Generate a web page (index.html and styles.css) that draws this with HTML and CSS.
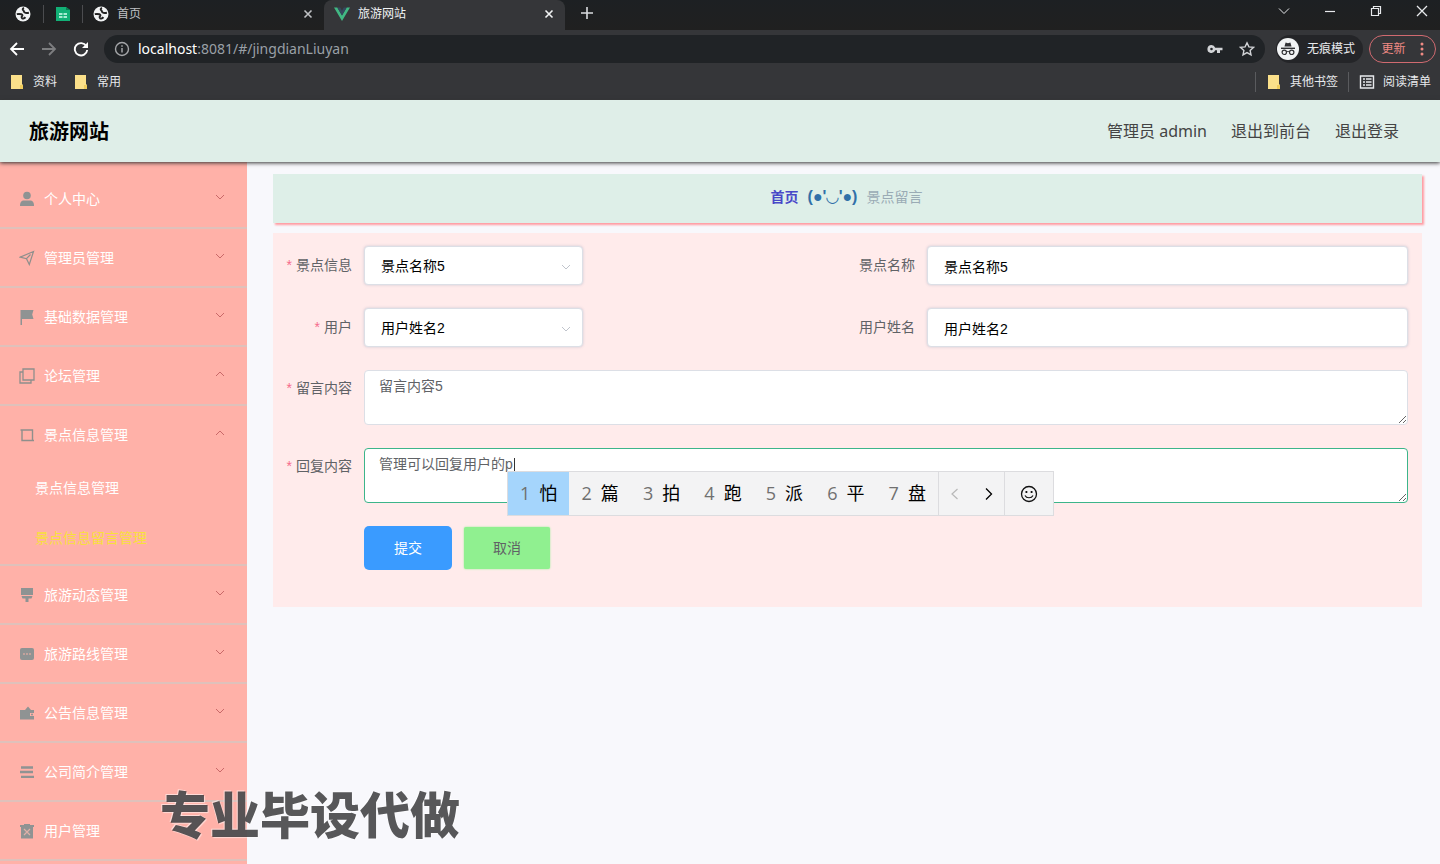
FILE: index.html
```html
<!DOCTYPE html>
<html lang="zh-CN">
<head>
<meta charset="utf-8">
<title>旅游网站</title>
<link rel="stylesheet" href="styles.css">
</head>
<body>
<svg class="sprite" aria-hidden="true">
  <symbol id="globe" viewBox="0 0 16 16"><circle cx="8" cy="8" r="7.500" fill="#f1f3f4"/><path d="M1.800 8.200c1.700-.4 3.200-.3 4.600 0 1.300.4 1.300 1.400.6 2-.8.700-.4 1.600.2 2.200.8.600 2.400-.2 3.200-1.300M9 1.800C7.600 2.300 7.300 3.600 8.200 4.300c.8.600.6 1.600 1.500 2.200 1.200.8 2.700.5 4.200.2" fill="none" stroke="#222" stroke-width="1.900"/></symbol>
  <symbol id="close" viewBox="0 0 12 12"><path d="M2.500 2.500l7 7M9.500 2.500l-7 7" fill="none" stroke="currentColor" stroke-width="1.600"/></symbol>
  <symbol id="down" viewBox="0 0 12 12"><path d="M2 4l4 4 4-4" fill="none" stroke="currentColor"/></symbol>
  <symbol id="up" viewBox="0 0 12 12"><path d="M2 8l4-4 4 4" fill="none" stroke="currentColor"/></symbol>
  <symbol id="folder" viewBox="0 0 14 16"><path d="M1 1h11v9l1 1v4H1z" fill="#fbe08a"/><path d="M10 15v-4h3v4z" fill="#f0cc5c"/></symbol>
</svg>

<div class="browser">
  <div class="tabs">
    <button class="pin" aria-label="首页"><svg class="i16"><use href="#globe"/></svg></button>
    <button class="pin" aria-label="表格"><svg class="i16" viewBox="0 0 16 16"><path d="M1 1h10l4 3v11H1z" fill="#12b076"/><path d="M11 1l4 3h-4z" fill="#0a7d52"/><path d="M4 8h3.500M8.500 8H12M4 11h3.500M8.500 11H12" stroke="#d8fff0" stroke-width="1.500"/></svg></button>
    <div class="tab"><svg class="i16"><use href="#globe"/></svg><span class="tab-title">首页</span><button class="tab-close" aria-label="关闭"><svg class="i12"><use href="#close"/></svg></button></div>
    <div class="tab active"><svg class="i16" viewBox="0 0 16 16"><path d="M0 1.500h3.300L8 9.600l4.700-8.100H16L8 15z" fill="#41b883"/><path d="M3.300 1.500h2.900L8 4.700l1.800-3.200h2.900L8 9.600z" fill="#35495e"/></svg><span class="tab-title">旅游网站</span><button class="tab-close" aria-label="关闭"><svg class="i12"><use href="#close"/></svg></button></div>
    <button class="new-tab" aria-label="新标签页"><svg class="i16" viewBox="0 0 16 16"><path d="M8 2v12M2 8h12" stroke="currentColor" stroke-width="1.600"/></svg></button>
    <div class="window-buttons">
      <button aria-label="搜索标签页"><svg class="i14" viewBox="0 0 14 14"><path d="M2 4.500l5 5 5-5" fill="none" stroke="currentColor"/></svg></button>
      <button aria-label="最小化"><svg class="i14" viewBox="0 0 14 14"><path d="M2 7.500h10" stroke="currentColor" stroke-width="1.200"/></svg></button>
      <button aria-label="还原"><svg class="i14" viewBox="0 0 14 14"><path d="M2.500 4.500h7v7h-7zM4.500 4.500v-2h7v7h-2" fill="none" stroke="currentColor" stroke-width="1.200"/></svg></button>
      <button aria-label="关闭窗口"><svg class="i14" viewBox="0 0 14 14"><path d="M2 2l10 10M12 2L2 12" stroke="currentColor" stroke-width="1.300"/></svg></button>
    </div>
  </div>
  <div class="toolbar">
    <div class="nav-buttons">
      <button aria-label="后退"><svg class="i16" viewBox="0 0 16 16"><path d="M15 8H2.500M8 2L2 8l6 6" fill="none" stroke="#fff" stroke-width="1.800"/></svg></button>
      <button aria-label="前进"><svg class="i16" viewBox="0 0 16 16"><path d="M1 8h12.500M8 2l6 6-6 6" fill="none" stroke="#7d7e80" stroke-width="1.800"/></svg></button>
      <button aria-label="刷新"><svg class="i16" viewBox="0 0 16 16"><path d="M13.300 5A6.200 6.200 0 1 0 14.200 9" fill="none" stroke="#fff" stroke-width="1.900"/><path d="M15 1v6H9z" fill="#fff"/></svg></button>
    </div>
    <div class="address">
      <svg class="i16" viewBox="0 0 16 16"><circle cx="8" cy="8" r="6.500" fill="none" stroke="#a4a6a9" stroke-width="1.400"/><path d="M8 7v4.500M8 4.200v1.600" stroke="#a4a6a9" stroke-width="1.500"/></svg>
      <div class="url"><b>localhost</b>:8081/#/jingdianLiuyan</div>
      <button aria-label="密码"><svg class="i16" viewBox="0 0 16 16"><path d="M4.500 4a4 4 0 1 0 3.700 5.300H10V12h3V9.300h2.500V6.700H8.200A4 4 0 0 0 4.500 4zm0 2.700a1.300 1.300 0 1 1 0 2.600 1.300 1.300 0 0 1 0-2.600z" fill="#d2d4d7" fill-rule="evenodd"/></svg></button>
      <button aria-label="收藏"><svg class="i16" viewBox="0 0 16 16"><path d="M8 1.800l1.900 4.100 4.500.5-3.300 3 .9 4.400L8 11.600l-4 2.200.9-4.400-3.300-3 4.500-.5z" fill="none" stroke="#d2d4d7" stroke-width="1.400"/></svg></button>
    </div>
    <button class="incognito"><svg class="i22" viewBox="0 0 22 22"><circle cx="11" cy="11" r="11" fill="#f1f3f4"/><path d="M7.500 8.500L8.600 4.400l2.400.8 2.400-.8 1.100 4.100z" fill="#303134"/><path d="M4 10.300h14" stroke="#303134" stroke-width="1.400"/><path d="M9.400 14c1-.7 2.200-.7 3.200 0" fill="none" stroke="#303134"/><circle cx="7.300" cy="14.300" r="2.200" fill="none" stroke="#303134" stroke-width="1.200"/><circle cx="14.700" cy="14.300" r="2.200" fill="none" stroke="#303134" stroke-width="1.200"/></svg>无痕模式</button>
    <button class="update">更新<svg class="i16" viewBox="0 0 16 16"><circle cx="8" cy="3" r="1.500" fill="#f08a84"/><circle cx="8" cy="8" r="1.500" fill="#f08a84"/><circle cx="8" cy="13" r="1.500" fill="#f08a84"/></svg></button>
  </div>
  <div class="bookmarks">
    <button><svg class="i16"><use href="#folder"/></svg>资料</button>
    <button><svg class="i16"><use href="#folder"/></svg>常用</button>
    <div class="bookmarks-right">
      <button><svg class="i16"><use href="#folder"/></svg>其他书签</button>
      <button><svg class="i16" viewBox="0 0 16 16"><path d="M1.500 2h13v12h-13z" fill="none" stroke="#e8eaed" stroke-width="1.400"/><path d="M4 5h2M4 8h2M4 11h2M7 5h5.500M7 8h5.500M7 11h5.500" stroke="#e8eaed" stroke-width="1.400"/></svg>阅读清单</button>
    </div>
  </div>
</div>

<header class="site-header">
  <h1>旅游网站</h1>
  <nav><span>管理员 admin</span><a href="#">退出到前台</a><a href="#">退出登录</a></nav>
</header>

<div class="layout">
  <nav class="sidebar">
    <div class="group"><button><svg class="i16" viewBox="0 0 16 16"><circle cx="8" cy="4.500" r="3.800" fill="#8f9393"/><path d="M1 15c0-4 1.500-5.500 4-5.500h6c2.500 0 4 1.500 4 5.500z" fill="#8f9393"/></svg><span>个人中心</span><svg class="i12 arrow"><use href="#down"/></svg></button></div>
    <div class="group"><button><svg class="i16" viewBox="0 0 16 16"><path d="M14.500 1.500L1 7.200l6.500 1.500 2.800 5.800zM11.500 4.500L7.500 8.700" fill="none" stroke="#8f8f8c" stroke-width="1.200"/></svg><span>管理员管理</span><svg class="i12 arrow"><use href="#down"/></svg></button></div>
    <div class="group"><button><svg class="i16" viewBox="0 0 16 16"><path d="M1.500 1h13l-1.300 4.500 1.300 4.500H3v6H1.500z" fill="#8f9393"/></svg><span>基础数据管理</span><svg class="i12 arrow"><use href="#down"/></svg></button></div>
    <div class="group"><button><svg class="i16" viewBox="0 0 16 16"><path d="M4 1h11v11H4zM4 4H1v11h11v-3" fill="none" stroke="#8f8f8c" stroke-width="1.300"/></svg><span>论坛管理</span><svg class="i12 arrow"><use href="#up"/></svg></button></div>
    <div class="group"><button><svg class="i16" viewBox="0 0 16 16"><path d="M3 3h10.500v10.500H3zM1.500 3H3M13.500 13.500H15" fill="none" stroke="#8f8f8c" stroke-width="1.400"/></svg><span>景点信息管理</span><svg class="i12 arrow"><use href="#up"/></svg></button>
      <div class="submenu"><a href="#">景点信息管理</a><a href="#" class="current">景点信息留言管理</a></div>
    </div>
    <div class="group"><button><svg class="i16" viewBox="0 0 16 16"><path d="M2 1h12v7H2zM2.500 9h11l-1 2.500H9.500V15h-3v-3.500h-3z" fill="#8f9393"/></svg><span>旅游动态管理</span><svg class="i12 arrow"><use href="#down"/></svg></button></div>
    <div class="group"><button><svg class="i16" viewBox="0 0 16 16"><rect x="1" y="2" width="14" height="12" rx="2" fill="#8f9393"/><path d="M4 8h2M7 8h2M10 8h2" stroke="#d3a8a0" stroke-width="1.300"/></svg><span>旅游路线管理</span><svg class="i12 arrow"><use href="#down"/></svg></button></div>
    <div class="group"><button><svg class="i16" viewBox="0 0 16 16"><path d="M1 5h5l3-3.500L12 5h3v3h-4v3h4v3.500H1z" fill="#8f9393"/><circle cx="13" cy="9.500" r="1" fill="#8f9393"/></svg><span>公告信息管理</span><svg class="i12 arrow"><use href="#down"/></svg></button></div>
    <div class="group"><button><svg class="i16" viewBox="0 0 16 16"><path d="M2 3.500h12M1 8h13M2 12.800h13" stroke="#8f9393" stroke-width="2.300"/></svg><span>公司简介管理</span><svg class="i12 arrow"><use href="#down"/></svg></button></div>
    <div class="group"><button><svg class="i16" viewBox="0 0 16 16"><path d="M1 2h4V1h6v1h4v2h-1v11.500H2V4H1z" fill="#8f9393"/><path d="M5 6l6 6M11 6l-6 6" stroke="#e0b0a8" stroke-width="1.200"/></svg><span>用户管理</span></button></div>
  </nav>

  <main>
    <nav class="breadcrumb"><a href="#">首页</a><span class="face">(●'◡'●)</span><span class="here">景点留言</span></nav>
    <form class="panel">
      <div class="row two">
        <label class="required" for="spot">景点信息</label>
        <div class="select"><select id="spot"><option>景点名称5</option></select><svg class="i12"><use href="#down"/></svg></div>
        <label for="spot-name">景点名称</label>
        <input id="spot-name" type="text" value="景点名称5">
      </div>
      <div class="row two">
        <label class="required" for="user">用户</label>
        <div class="select"><select id="user"><option>用户姓名2</option></select><svg class="i12"><use href="#down"/></svg></div>
        <label for="user-name">用户姓名</label>
        <input id="user-name" type="text" value="用户姓名2">
      </div>
      <div class="row">
        <label class="required" for="message">留言内容</label>
        <textarea id="message">留言内容5</textarea>
      </div>
      <div class="row">
        <label class="required" for="reply">回复内容</label>
        <div class="composer">
          <textarea id="reply" class="focused">管理可以回复用户的p</textarea>
          <span class="caret"></span>
          <div class="ime">
            <button type="button" class="word chosen"><i>1</i>怕</button><button type="button" class="word"><i>2</i>篇</button><button type="button" class="word"><i>3</i>拍</button><button type="button" class="word"><i>4</i>跑</button><button type="button" class="word"><i>5</i>派</button><button type="button" class="word"><i>6</i>平</button><button type="button" class="word"><i>7</i>盘</button>
            <div class="pager"><button type="button" class="off" aria-label="上一页"><svg class="i16" viewBox="0 0 16 16"><path d="M10.500 3L5 8l5.500 5" fill="none" stroke="currentColor" stroke-width="1.200"/></svg></button><button type="button" aria-label="下一页"><svg class="i16" viewBox="0 0 16 16"><path d="M6 2.500L11.500 8 6 13.500" fill="none" stroke="currentColor" stroke-width="1.300"/></svg></button></div>
            <button type="button" class="emoji" aria-label="表情"><svg class="i20" viewBox="0 0 20 20"><circle cx="10" cy="10" r="7.500" fill="none" stroke="#111" stroke-width="1.300"/><circle cx="7.400" cy="8" r="1.100"/><circle cx="12.600" cy="8" r="1.100"/><path d="M6 11.500c1.500 3 6.500 3 8 0" fill="none" stroke="#111" stroke-width="1.200"/></svg></button>
          </div>
        </div>
      </div>
      <div class="actions"><button type="button" class="submit">提交</button><button type="button" class="cancel">取消</button></div>
    </form>
  </main>
</div>
<div class="watermark">专业毕设代做</div>
</body>
</html>
```

FILE: styles.css
```css
* { box-sizing: border-box; }
body {
  margin: 0;
  height: 100vh;
  display: flex;
  flex-direction: column;
  overflow: hidden;
  position: relative;
  background: #f8f8fc;
  font: 14px/20px "Open Sans", "Noto Sans CJK SC", sans-serif;
  color: #606266;
}
button { border: 0; padding: 0; background: none; font: inherit; color: inherit; display: flex; align-items: center; justify-content: center; }
a { color: inherit; text-decoration: none; }
svg { flex: none; display: block; }
.sprite { position: absolute; width: 0; height: 0; }
.i12 { width: 12px; height: 12px; }
.i14 { width: 14px; height: 14px; }
.i16 { width: 16px; height: 16px; }
.i20 { width: 20px; height: 20px; }
.i22 { width: 22px; height: 22px; }

/* browser frame */
.browser { flex: none; background: #353639; color: #e8eaed; font-size: 12px; }
.tabs { display: flex; height: 30px; background: linear-gradient(#1d2023, #202020); }
.pin { width: 39px; height: 18px; margin-top: 5px; border-right: 1px solid #4b4c4f; }
.pin:first-child { width: 44px; padding-left: 2px; }
.tab { display: flex; align-items: center; width: 241px; padding: 0 10px 2px; gap: 8px; color: #bfc1c4; }
.tab.active { background: #353639; color: #f1f3f4; border-radius: 8px 8px 0 0; }
.tab-title { flex: 1; }
.new-tab { width: 44px; padding-bottom: 4px; color: #dadce0; }
.window-buttons { margin-left: auto; display: flex; padding-bottom: 9px; }
.window-buttons button { width: 46px; }
.window-buttons button:last-child { width: 36px; margin-left: 5px; }
.toolbar { display: flex; align-items: center; height: 37px; padding-right: 4px; }
.nav-buttons { display: flex; gap: 16px; padding: 0 15px 0 9px; }
.address { flex: 1; display: flex; align-items: center; gap: 16px; height: 28px; padding: 0 10px; border-radius: 14px; background: #202326; }
.url { flex: 1; margin-left: -8px; font: 14px/20px "Noto Sans", sans-serif; color: #9aa0a6; }
.url b { font-weight: 400; color: #fff; }
.incognito { height: 28px; margin: 0 6px 0 11px; padding: 0 8px 0 1px; gap: 8px; border-radius: 14px; background: #242528; }
.update { height: 28px; width: 67px; padding-left: 6px; gap: 8px; border: 1px solid #d06a70; border-radius: 14px; color: #f08a84; }
.bookmarks { display: flex; align-items: center; height: 33px; padding: 0 9px 4px; gap: 16px; }
.bookmarks button { gap: 8px; }
.bookmarks-right { display: flex; margin-left: auto; }
.bookmarks-right button { padding-left: 10px; border-left: 1px solid #5a5b5e; }
.bookmarks-right button:first-child { padding-right: 10px; }

/* site header */
.site-header {
  flex: none; display: flex; align-items: center; justify-content: space-between;
  height: 62px; padding: 0 41px 0 29px;
  background: #dfeee8; position: relative; z-index: 1;
  box-shadow: 0 1px 4px #333;
}
h1 { margin: 0; padding-top: 2px; font-size: 20px; line-height: 28px; color: #000; }
.site-header nav { display: flex; gap: 24px; font-family: "Noto Sans", "Noto Sans CJK SC", sans-serif; font-size: 16px; color: #444; }

.layout { flex: 1; min-height: 0; display: flex; }
.sidebar { flex: none; width: 247px; padding-top: 8px; background: #ffb1a8; overflow: hidden; color: #fff; }
.group { border-bottom: 2px solid #dfc1bb; }
.group button { width: 100%; height: 57px; padding: 0 21px 0 19px; gap: 9px; }
.group span { flex: 1; text-align: left; }
.arrow { color: #c96868; margin-bottom: 4px; }
.submenu { padding-bottom: 1px; }
.submenu a { display: block; padding-left: 35px; line-height: 50px; }
.submenu .current { color: #f8e03c; }

main { flex: 1; min-width: 0; padding: 12px 18px 0 26px; }
.breadcrumb {
  display: flex; align-items: center; justify-content: center; gap: 9px;
  height: 49px; padding: 0 2px 3px 0; margin-bottom: 10px;
  background: #deefe8; box-shadow: 2px 2px 2px #ff9ba1;
}
.breadcrumb a { font-weight: 700; color: #4848c8; }
.face { font: 700 16px/20px "Liberation Sans", "DejaVu Sans", sans-serif; color: #3070a8; }
.here { color: #9aabb5; }

.panel { display: flex; flex-direction: column; gap: 23px; padding: 13px 14px 37px 0; background: #ffebeb; }
.row { display: grid; grid-template-columns: 79px 1fr; column-gap: 12px; }
.row.two { grid-template-columns: 79px 1fr 79px 481px; }
label { text-align: right; line-height: 38px; }
.row:not(.two) label { line-height: 36px; }
.required::before { content: "*"; margin-right: 4px; font-family: "Liberation Sans", sans-serif; color: #f56c8c; }
input, select, textarea {
  font: 14px/20px "Liberation Sans", "Noto Sans CJK SC", sans-serif;
  border: 1px solid #dcdfe6; border-radius: 4px; background: #fff; outline: none;
}
input, select { width: 100%; height: 39px; padding: 0 16px; color: #000; box-shadow: 0 0 3px #ccc8d4; }
.row.two { padding-bottom: 1px; margin-bottom: -1px; }
select { appearance: none; }
.select { position: relative; width: 219px; }
.select svg { position: absolute; right: 11px; top: 15px; color: #c0c4cc; }
textarea { display: block; width: 100%; height: 55px; padding: 5px 14px; resize: vertical; color: #606266; }
.focused { border-color: #3cb58a; }
.composer { position: relative; }
.caret { position: absolute; left: 150px; top: 10px; width: 1px; height: 15px; background: #333; }

/* candidate window */
.ime { position: absolute; left: 143px; top: 23px; display: flex; width: 547px; height: 45px; border: 1px solid #dcdcdf; background: #f3f3f4; color: #000; font-size: 18px; }
.word { flex: 1; gap: 9px; padding-bottom: 1px; }
.word i { font-style: normal; color: #707070; }
.chosen { background: #a5d5fc; }
.pager { display: flex; width: 67px; border: 1px solid #dcdcdf; border-width: 0 1px; }
.pager button { flex: 1; }
.pager .off { color: #b8b8b8; }
.emoji { width: 48px; }

.actions { display: flex; align-items: center; gap: 12px; padding-left: 91px; }
.actions button { border-radius: 5px; }
.submit { width: 88px; height: 44px; background: #3a9bff; color: #fff; }
.cancel { width: 86px; height: 42px; background: #90f090; box-shadow: 0 0 2px #90f090; }
.actions .cancel { border-radius: 2px; }

.watermark {
  position: absolute; left: 160px; bottom: 17px;
  font: 900 50px/70px "Noto Sans CJK SC", sans-serif;
  color: rgba(40, 40, 42, 0.78);
  text-shadow: -1px -1px 0 #fff8, 1px 1px 1px #fff8;
  pointer-events: none;
}
```
